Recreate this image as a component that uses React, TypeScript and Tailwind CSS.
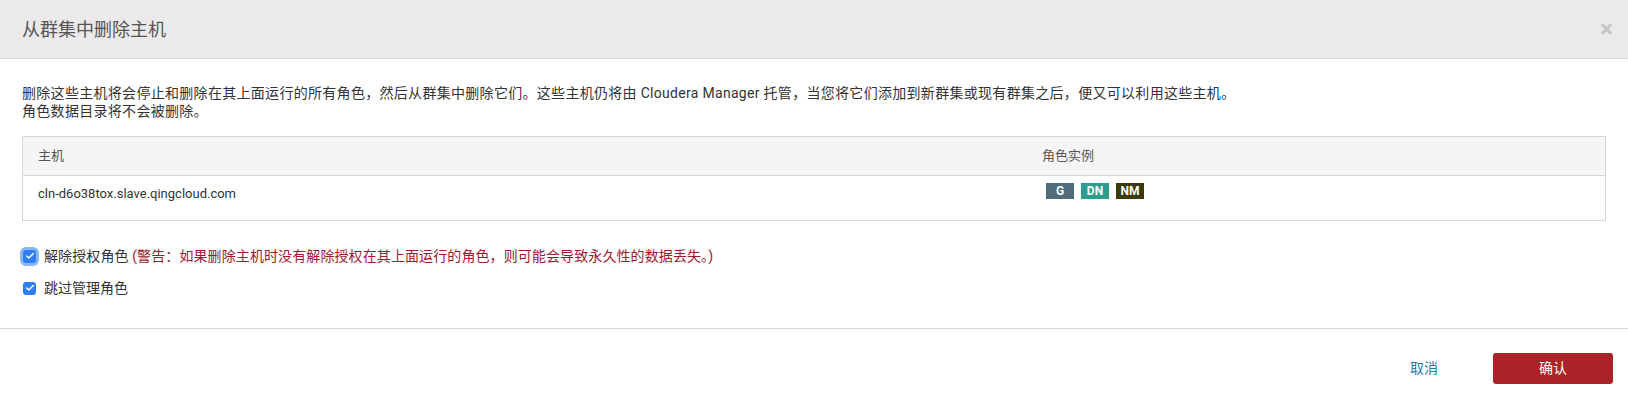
import { Check } from 'lucide-react';

const font = { fontFamily: 'Roboto, "Noto Sans CJK SC", sans-serif' };

function Box({ focused }: { focused?: boolean }) {
  return (
    <span
      className={`inline-flex h-[13px] w-[13px] shrink-0 items-center justify-center rounded-[3px] bg-[#2f7ef6] ${
        focused ? 'ring-[3px] ring-[#8ab6f4]' : ''
      }`}
    >
      <Check className="h-[10px] w-[10px] text-white" strokeWidth={3.5} />
    </span>
  );
}

const roles = [
  { name: 'G', color: 'bg-[#506b7a]' },
  { name: 'DN', color: 'bg-[#2a9e8b]' },
  { name: 'NM', color: 'bg-[#3b3a08]' },
];

export default function App() {
  return (
    <div className="w-full bg-white text-[#333]" style={font}>
      {/* Header */}
      <div className="flex h-[59px] items-center justify-between border-b border-[#d6d6d6] bg-[#ebe9ea] pl-[22px] pr-[15px]">
        <h3 className="text-[18px] text-[#555]">从群集中删除主机</h3>
        <span className="text-[24px] font-bold leading-none text-[#c6c6c6]">×</span>
      </div>

      {/* Body */}
      <div className="px-[22px] pt-[25px] text-[14px] leading-[18px]">
        <p className="tracking-[0.3px]">删除这些主机将会停止和删除在其上面运行的所有角色，然后从群集中删除它们。这些主机仍将由 Cloudera Manager 托管，当您将它们添加到新群集或现有群集之后，便又可以利用这些主机。</p>
        <p className="tracking-[0.3px]">角色数据目录将不会被删除。</p>

        <div className="mt-[16px] border border-[#d6d6d6] text-[13px]">
          <div className="flex h-[39px] items-center border-b border-[#d6d6d6] bg-[#f5f5f5] text-[#555]">
            <div className="w-[1006px] px-[15px]">主机</div>
            <div className="flex-1 px-[13px]">角色实例</div>
          </div>
          <div className="flex h-[44px] items-start pt-[9px]">
            <div className="w-[1006px] px-[15px]">cln-d6o38tox.slave.qingcloud.com</div>
            <div className="-mt-[2px] flex flex-1 gap-[7px] px-[17px]">
              {roles.map((r) => (
                <span
                  key={r.name}
                  className={`flex h-[16px] w-[28px] items-center justify-center text-[12px] font-bold text-white ${r.color}`}
                >
                  {r.name}
                </span>
              ))}
            </div>
          </div>
        </div>

        <div className="mt-[26px] flex flex-col gap-[14px] pl-[1px]">
          <label className="flex items-center gap-[8px]">
            <Box focused />
            <span className="tracking-[0.1px]">
              解除授权角色 <span className="text-[#a0172f]">(警告：如果删除主机时没有解除授权在其上面运行的角色，则可能会导致永久性的数据丢失。)</span>
            </span>
          </label>
          <label className="flex items-center gap-[8px]">
            <Box />
            <span>跳过管理角色</span>
          </label>
        </div>
      </div>

      {/* Footer */}
      <div className="mt-[31px] border-t border-[#d6d6d6]">
        <div className="flex items-center justify-end gap-[55px] pr-[15px] pt-[24px] pb-[19px]">
          <button className="text-[14px] text-[#2b78ad]">取消</button>
          <button className="h-[31px] w-[120px] rounded-[3px] bg-[#aa2326] text-[14px] text-white">确认</button>
        </div>
      </div>
    </div>
  );
}
